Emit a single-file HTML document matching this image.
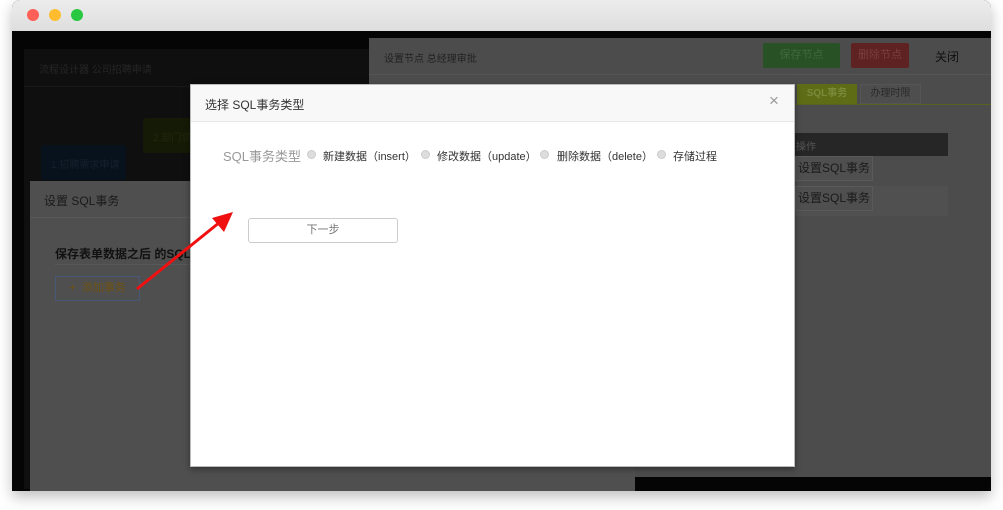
<!DOCTYPE html>
<html><head><meta charset="utf-8"><style>
*{margin:0;padding:0;box-sizing:border-box}
body{width:1003px;height:510px;background:#fff;position:relative;overflow:hidden;font-family:"Liberation Sans","Noto Sans CJK SC",sans-serif;font-size:12px}
.a{position:absolute;white-space:nowrap}
</style></head><body>
<div class="a" style="left:12px;top:0;width:979px;height:491px;border-radius:8px 8px 0 0;background:#050505;box-shadow:0 6px 14px rgba(0,0,0,.25);overflow:hidden">
 <div class="a" style="left:0;top:0;width:979px;height:31px;background:linear-gradient(#ececec,#dedede)"></div>
 <div class="a" style="left:15px;top:9px;width:12px;height:12px;border-radius:6px;background:#fe5f57"></div>
 <div class="a" style="left:37px;top:9px;width:12px;height:12px;border-radius:6px;background:#febc2e"></div>
 <div class="a" style="left:59px;top:9px;width:12px;height:12px;border-radius:6px;background:#28c840"></div>
</div>
<div class="a" style="left:24px;top:49px;width:360px;height:440px;background:#0f0f0f"></div>
<div class="a" style="left:24px;top:86px;width:360px;height:1px;background:#181818"></div>
<div class="a" style="left:39px;top:61px;color:#262626;font-size:10px">流程设计器 公司招聘申请</div>
<div class="a" style="left:41px;top:145px;width:85px;height:35px;background:#08121c;border-radius:3px;color:#14202c;font-size:10px;padding:11px 10px">1.招聘需求申请</div>
<div class="a" style="left:143px;top:118px;width:60px;height:35px;background:#151a06;border-radius:3px;color:#22280c;font-size:10px;padding:11px 10px">2.部门领</div>
<div class="a" style="left:369px;top:38px;width:622px;height:439px;background:#4c4c4c"></div>
<div class="a" style="left:369px;top:74px;width:622px;height:1px;background:#555"></div>
<div class="a" style="left:384px;top:50px;color:#222;font-size:10px">设置节点 总经理审批</div>
<div class="a" style="left:763px;top:43px;width:77px;height:25px;background:#285226;border-radius:2px;color:#3e6a3e;text-align:center;line-height:25px;font-size:11px">保存节点</div>
<div class="a" style="left:851px;top:43px;width:58px;height:25px;background:#5e2222;border-radius:2px;color:#7a3e3e;text-align:center;line-height:25px;font-size:11px">删除节点</div>
<div class="a" style="left:935px;top:48px;color:#111">关闭</div>
<div class="a" style="left:795px;top:104px;width:196px;height:1px;background:#56621e"></div>
<div class="a" style="left:797px;top:84px;width:60px;height:20px;background:#5e6c16;color:#7a8a3a;text-align:center;line-height:20px;font-size:10px;font-weight:bold">SQL事务</div>
<div class="a" style="left:860px;top:84px;width:61px;height:20px;background:#4e4e4e;border:1px solid #555;color:#2a2a2a;text-align:center;line-height:18px;font-size:10px">办理时限</div>
<div class="a" style="left:790px;top:133px;width:158px;height:23px;background:#262626;color:#555;font-size:10px;padding:5px 6px">操作</div>
<div class="a" style="left:790px;top:186px;width:158px;height:30px;background:#505050"></div>
<div class="a" style="left:795px;top:156px;width:78px;height:25px;background:#4f4f4f;border:1px solid #5a5a5a;color:#1a1a1a;text-align:center;line-height:23px">设置SQL事务</div>
<div class="a" style="left:795px;top:186px;width:78px;height:25px;background:#4f4f4f;border:1px solid #5a5a5a;color:#1a1a1a;text-align:center;line-height:23px">设置SQL事务</div>
<div class="a" style="left:30px;top:181px;width:605px;height:310px;background:#4f4f4f"></div>
<div class="a" style="left:30px;top:217px;width:605px;height:1px;background:#585858"></div>
<div class="a" style="left:44px;top:192px;color:#1a1a1a;font-size:12px">设置 SQL事务</div>
<div class="a" style="left:55px;top:245px;color:#111;font-size:12px;font-weight:bold">保存表单数据之后 的SQL事务</div>
<div class="a" style="left:55px;top:264px;width:140px;height:1px;background:#585858"></div>
<div class="a" style="left:55px;top:276px;width:85px;height:25px;border:1px solid #4a5878;color:#6e5212;text-align:center;line-height:23px;font-size:11px">+&nbsp; 添加事务</div>
<div class="a" style="left:190px;top:84px;width:605px;height:383px;background:#fff;border:1px solid #bbb;box-shadow:0 2px 6px rgba(0,0,0,.4)">
 <div class="a" style="left:0;top:0;width:603px;height:37px;background:#f8f8f8;border-bottom:1px solid #e8e8e8"></div>
 <div class="a" style="left:14px;top:11px;color:#333;font-size:12px">选择 SQL事务类型</div>
 <div class="a" style="left:578px;top:6px;color:#999;font-size:17px">×</div>
 <div class="a" style="left:32px;top:61px;color:#999;font-size:13px">SQL事务类型</div>
 <div class="a" style="left:116px;top:65px;width:9px;height:9px;border-radius:5px;background:#ddd;border:1px solid #ccc"></div>
 <div class="a" style="left:132px;top:63px;color:#333;font-size:11px">新建数据（insert）</div>
 <div class="a" style="left:230px;top:65px;width:9px;height:9px;border-radius:5px;background:#ddd;border:1px solid #ccc"></div>
 <div class="a" style="left:246px;top:63px;color:#333;font-size:11px">修改数据（update）</div>
 <div class="a" style="left:349px;top:65px;width:9px;height:9px;border-radius:5px;background:#ddd;border:1px solid #ccc"></div>
 <div class="a" style="left:366px;top:63px;color:#333;font-size:11px">删除数据（delete）</div>
 <div class="a" style="left:466px;top:65px;width:9px;height:9px;border-radius:5px;background:#ddd;border:1px solid #ccc"></div>
 <div class="a" style="left:482px;top:63px;color:#333;font-size:11px">存储过程</div>
 <div class="a" style="left:57px;top:133px;width:150px;height:25px;border:1px solid #ccc;border-radius:3px;color:#777;text-align:center;line-height:23px;font-size:11px">下一步</div>
</div>
<svg class="a" style="left:0;top:0" width="1003" height="510">
 <line x1="137" y1="289" x2="220" y2="222" stroke="#f01010" stroke-width="3"/>
 <polygon points="233,212 212,218 224,232" fill="#f01010"/>
</svg>
</body></html>
